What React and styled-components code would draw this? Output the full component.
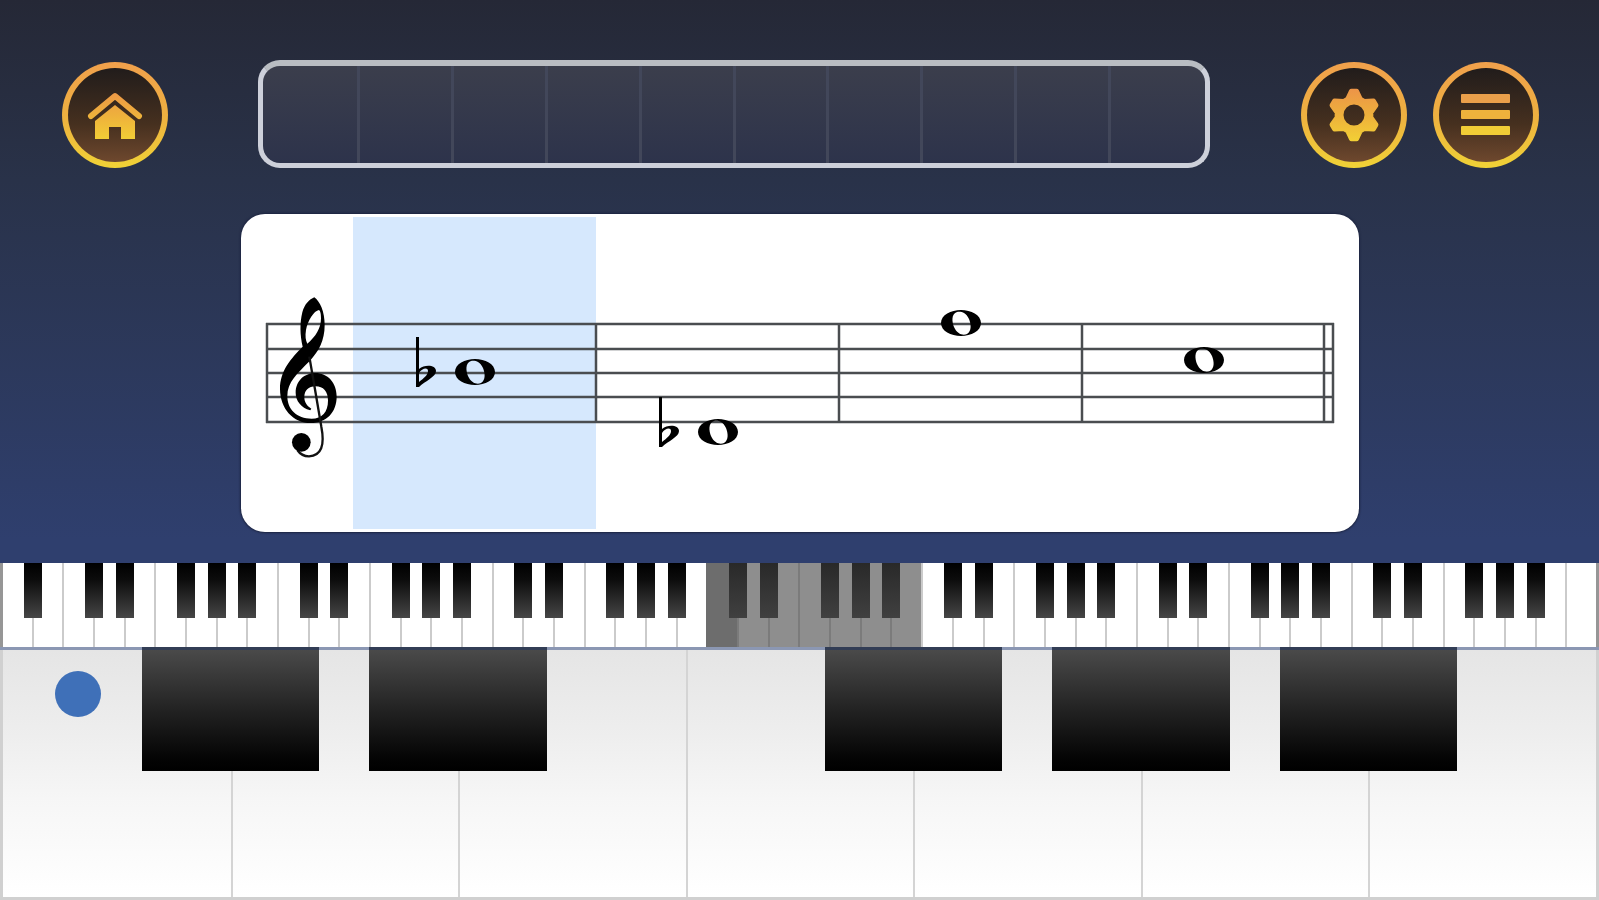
import React from "react";
import styled, { createGlobalStyle } from "styled-components";

const GlobalStyle = createGlobalStyle`
  *, *::before, *::after { box-sizing: border-box; }
  html, body, #root { height: 100%; }
  body {
    margin: 0;
    background: #2f3f6e;
    font-family: "Liberation Sans", Arial, sans-serif;
  }
  button { appearance: none; border: 0; padding: 0; margin: 0; cursor: pointer; }
`;

const Screen = styled.main`
  display: flex;
  flex-direction: column;
  min-height: 100%;
  background: linear-gradient(#252836 0, #293249 180px, #2f3f6e 540px);
`;

const Header = styled.header`
  display: flex;
  align-items: flex-end;
  padding: 60px 60px 0 62px;
`;

const Actions = styled.nav`
  display: flex;
  gap: 26px;
`;

const RoundButton = styled.button`
  flex: none;
  display: grid;
  place-items: center;
  width: 106px;
  height: 106px;
  border: 6px solid transparent;
  border-radius: 50%;
  background:
    linear-gradient(#211c1b, #46301f 60%, #6e482e) padding-box,
    linear-gradient(#f0a04c, #eeb040 50%, #f0d236) border-box;
`;

const Icon = styled.svg`
  display: block;
  width: 60px;
  height: 60px;
`;

const Progress = styled.div`
  flex: 1;
  display: flex;
  height: 108px;
  margin: 0 91px 0 90px;
  padding: 0 3px;
  border: 5px solid #cdd0da;
  border-top: 6px solid #b9bdc2;
  border-radius: 22px;
  background: linear-gradient(#3b3e4c, #2d334b);
`;

const Step = styled.span`
  flex: 1;
  border-left: 3px solid #42475a;
  &:first-child { border-left: 0; }
`;

const ScoreCard = styled.section`
  margin: 46px 240px 31px 241px;
  border-radius: 24px;
  background: #fff;
  overflow: hidden;
  box-shadow: 0 0 2px 1px #1c2440;
`;

const Score = styled.svg`
  display: block;
  width: 100%;
  height: auto;
`;

const MiniKeyboard = styled.div`
  display: flex;
  height: 84px;
  padding: 0 3px;
  background: #969696;
`;

const miniTone = {
  plain: ["#ffffff", "#cbcbcb"],
  range: ["#8e8e8e", "#7b7b7b"],
  active: ["#6d6d6d", "#6d6d6d"],
};

const MiniKey = styled.div`
  position: relative;
  flex: 1;
  background: ${(p) => miniTone[p.$tone][0]};
  border-left: 2px solid ${(p) => miniTone[p.$tone][1]};
  &:first-child { border-left: 0; }
`;

const MiniBlackKey = styled.span`
  position: absolute;
  z-index: 1;
  top: 0;
  right: -10px;
  width: 18px;
  height: 55px;
  background: ${(p) =>
    p.$shaded ? "linear-gradient(#292929, #404040)" : "linear-gradient(#000, #0c0c0c 30%, #464646)"};
`;

const Keyboard = styled.div`
  flex: 1;
  display: flex;
  min-height: 250px;
  padding: 0 3px 3px;
  border-top: 3px solid #8b97b3;
  background: #d0d0d0;
`;

const KeySlot = styled.div`
  position: relative;
  flex: 1;
`;

const WhiteKey = styled.button`
  display: block;
  width: 100%;
  height: 100%;
  background: linear-gradient(#e5e5e5, #eeeeee 35%, #f6f6f6 60%, #fff);
  border-left: ${(p) => (p.$first ? "0" : "2px solid #d4d4d4")};
`;

const BlackKey = styled.button`
  position: absolute;
  z-index: 1;
  top: -3px;
  right: -39%;
  width: 78%;
  height: 50%;
  border-top: 3px solid #323d55;
  background: linear-gradient(#4a4a4a, #222 50%, #040404 90%, #000);
`;

const Marker = styled.span`
  position: absolute;
  top: 21px;
  left: 52px;
  width: 46px;
  height: 46px;
  border-radius: 50%;
  background: #3f70b8;
  pointer-events: none;
`;

function Gold({ id }) {
  return (
    <defs>
      <linearGradient id={id} gradientUnits="userSpaceOnUse" x1="0" y1="-26" x2="0" y2="26">
        <stop offset="0" stopColor="#ec9448" />
        <stop offset="0.5" stopColor="#eeb03c" />
        <stop offset="1" stopColor="#f2d035" />
      </linearGradient>
    </defs>
  );
}

function HomeIcon() {
  return (
    <Icon viewBox="-30 -30 60 60" aria-hidden="true">
      <Gold id="gold-home" />
      <path d="M-24 1L0-19L24 1" fill="none" stroke="url(#gold-home)" strokeWidth="6" strokeLinecap="round" strokeLinejoin="round" />
      <path d="M-20 6L0-10L20 6V24H6V12H-6V24H-20Z" fill="url(#gold-home)" />
    </Icon>
  );
}

const gearPoint = (radius, degrees) => {
  const a = ((degrees - 90) * Math.PI) / 180;
  return `${(radius * Math.cos(a)).toFixed(2)} ${(radius * Math.sin(a)).toFixed(2)}`;
};

const gearOutline = [0, 60, 120, 180, 240, 300]
  .map((d) => `${gearPoint(17, d - 22)}L${gearPoint(24, d - 6)}L${gearPoint(24, d + 6)}L${gearPoint(17, d + 22)}`)
  .join("L");

function GearIcon() {
  return (
    <Icon viewBox="-30 -30 60 60" aria-hidden="true">
      <Gold id="gold-gear" />
      <path
        d={`M${gearOutline}ZM-13 0A13 13 0 1 0 13 0A13 13 0 1 0 -13 0Z`}
        fill="url(#gold-gear)"
        fillRule="evenodd"
        stroke="url(#gold-gear)"
        strokeWidth="5"
        strokeLinejoin="round"
      />
    </Icon>
  );
}

function MenuIcon() {
  return (
    <Icon viewBox="-30 -30 60 60" aria-hidden="true">
      <rect x="-25" y="-21" width="49" height="9" rx="1" fill="#ea9f4a" />
      <rect x="-25" y="-5" width="49" height="9" rx="1" fill="#eeb23c" />
      <rect x="-25" y="11" width="49" height="9" rx="1" fill="#f1cd36" />
    </Icon>
  );
}

function TrebleClef() {
  return (
    <g transform="translate(19 66) scale(0.3333)">
      <path
        fillRule="evenodd"
        d="M163 52C180 64 194 95 194 135C194 182 176 214 150 242C112 280 82 306 82 348C82 388 110 416 155 416C186 416 204 396 204 362C204 334 190 319 167 319C145 319 133 332 133 351C133 367 141 378 154 386L151 391C123 383 107 362 107 338C107 302 134 279 166 279C203 279 230 308 230 350C230 396 200 429 152 429C100 429 60 386 60 326C60 272 94 234 128 200C120 165 119 130 127 97C134 72 148 58 163 52Z
           M177 90C162 92 143 122 138 150C135 168 137 182 142 191C167 170 183 145 183 115C183 99 181 94 177 90Z"
      />
      <path
        d="M148 230L167 340L184 440C195 496 184 527 147 529C132 529 120 522 112 510"
        fill="none"
        stroke="#111"
        strokeWidth="7"
      />
      <circle cx="124" cy="487" r="28" />
    </g>
  );
}

function WholeNote({ x, y, flat }) {
  return (
    <g transform={`translate(${x} ${y})`}>
      <path
        fillRule="evenodd"
        d="M-20 0C-20-8-10-13 0-13C10-13 20-8 20 0C20 8 10 13 0 13C-10 13-20 8-20 0ZM-4-11C-10-9-9-1-7 4C-4 11 2 13 6 11C11 8 10 1 8-4C5-11-1-12-4-11Z"
      />
      {flat && (
        <path
          fillRule="evenodd"
          d="M-59-35H-56V-3C-50-8-39-7-39-1C-39 5-50 9-56 15H-59ZM-56 1V10C-51 6-47 3-47-1C-47-5-53-4-56 1Z"
        />
      )}
    </g>
  );
}

const STAFF_LINES = [110, 135, 159, 183, 208];
const BAR_LINES = [26, 355, 598, 841, 1083, 1092];
const NOTES = [
  { x: 234, y: 158, flat: true },
  { x: 477, y: 218, flat: true },
  { x: 720, y: 109 },
  { x: 963, y: 146 },
];

function StaffScore() {
  return (
    <Score viewBox="0 0 1118 318" role="img" aria-label="Treble staff: B flat, D flat, F, C">
      <rect x="112" y="3" width="243" height="312" fill="#d6e8fd" />
      <g stroke="#4a4d50" strokeWidth="2.5">
        {STAFF_LINES.map((y) => (
          <line key={y} x1="25" x2="1093" y1={y} y2={y} />
        ))}
        {BAR_LINES.map((x) => (
          <line key={x} x1={x} x2={x} y1="109" y2="209" />
        ))}
      </g>
      <TrebleClef />
      {NOTES.map((n) => (
        <WholeNote key={n.x} {...n} />
      ))}
    </Score>
  );
}

const MINI_KEYS = Array.from({ length: 52 }, (_, i) => ({
  tone: i === 23 ? "active" : i > 23 && i < 30 ? "range" : "plain",
  black: i !== 51 && i % 7 !== 1 && i % 7 !== 4,
}));

const OCTAVE = [
  { name: "C", sharp: true, marked: true },
  { name: "D", sharp: true },
  { name: "E" },
  { name: "F", sharp: true },
  { name: "G", sharp: true },
  { name: "A", sharp: true },
  { name: "B" },
];

export default function App() {
  return (
    <>
      <GlobalStyle />
      <Screen>
        <Header>
          <RoundButton type="button" aria-label="Home">
            <HomeIcon />
          </RoundButton>
          <Progress role="progressbar" aria-label="Progress" aria-valuemin={0} aria-valuemax={10} aria-valuenow={0}>
            {Array.from({ length: 10 }, (_, i) => (
              <Step key={i} />
            ))}
          </Progress>
          <Actions>
            <RoundButton type="button" aria-label="Settings">
              <GearIcon />
            </RoundButton>
            <RoundButton type="button" aria-label="Menu">
              <MenuIcon />
            </RoundButton>
          </Actions>
        </Header>
        <ScoreCard>
          <StaffScore />
        </ScoreCard>
        <MiniKeyboard aria-hidden="true">
          {MINI_KEYS.map((k, i) => (
            <MiniKey key={i} $tone={k.tone}>
              {k.black && <MiniBlackKey $shaded={k.tone !== "plain"} />}
            </MiniKey>
          ))}
        </MiniKeyboard>
        <Keyboard>
          {OCTAVE.map((k, i) => (
            <KeySlot key={k.name}>
              <WhiteKey type="button" aria-label={k.name} $first={i === 0} />
              {k.marked && <Marker />}
              {k.sharp && <BlackKey type="button" aria-label={`${k.name} sharp`} />}
            </KeySlot>
          ))}
        </Keyboard>
      </Screen>
    </>
  );
}
